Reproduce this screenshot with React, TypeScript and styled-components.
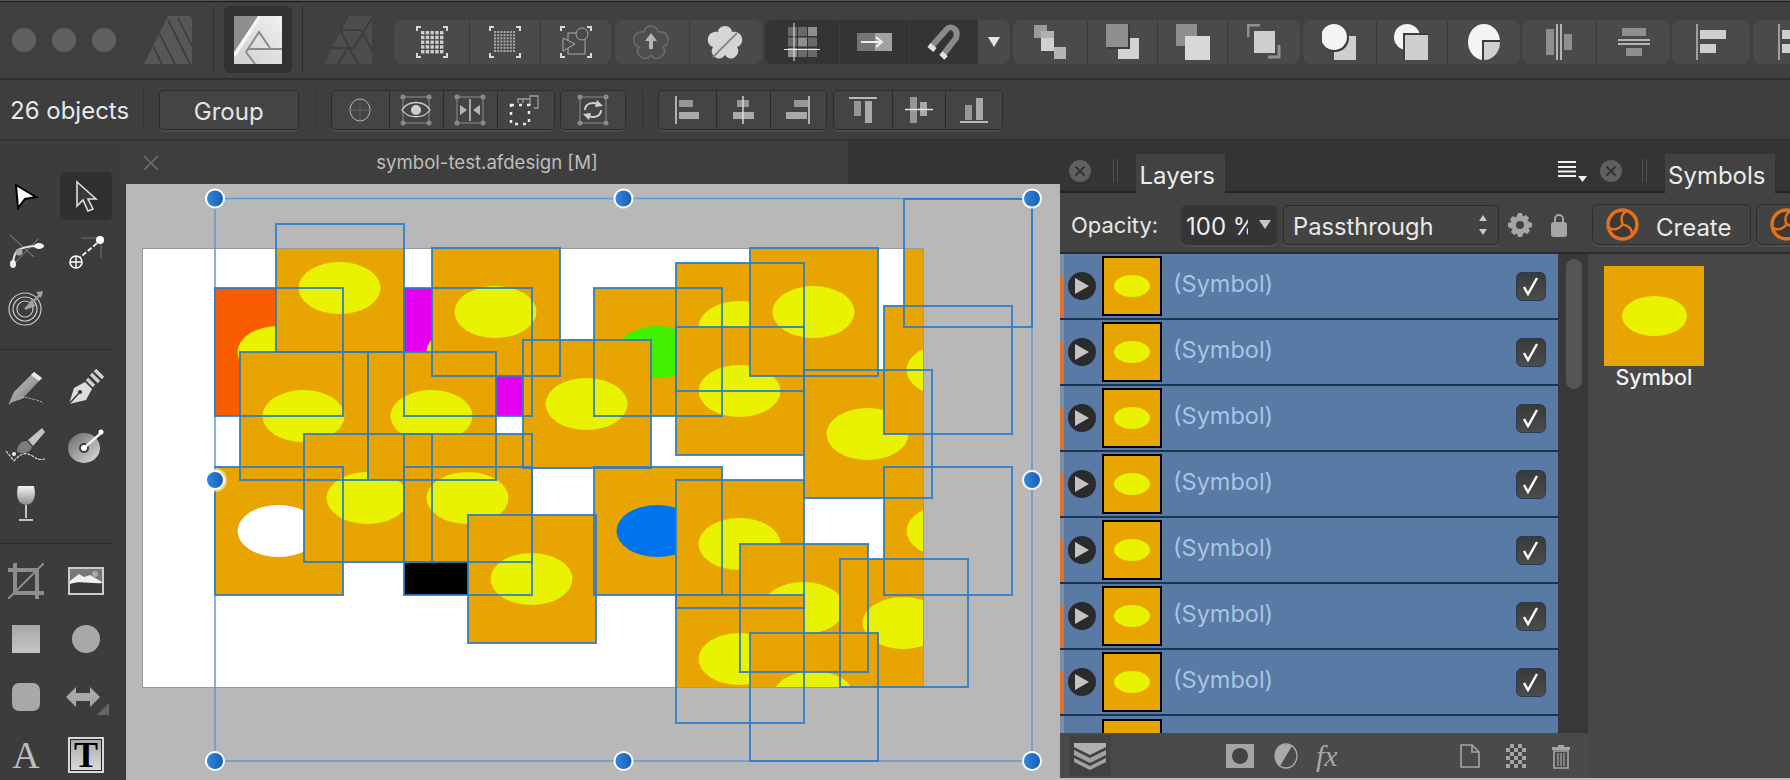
import React from "react";
import styled, { createGlobalStyle } from "styled-components";

const GlobalStyle = createGlobalStyle`
  html, body { margin: 0; padding: 0; background: #3f3f3f; overflow: hidden; }
  * { box-sizing: border-box; }
`;

const Page = styled.div`
  width: 1790px;
  height: 780px;
  display: flex;
  flex-direction: column;
  overflow: hidden;
  font-family: Inter, "Liberation Sans", sans-serif;
  color: #e6e6e6;
`;

const TopEdge = styled.div`
  height: 3px;
  flex: none;
  background: linear-gradient(#6a6a6a, #111 60%, #555);
`;

const TopBar = styled.div`
  height: 77px;
  flex: none;
  display: flex;
  align-items: flex-start;
  background: #404040;
  border-bottom: 2px solid #2f2f2f;
  overflow: hidden;
`;

const Dots = styled.div`
  display: flex;
  gap: 16px;
  margin: 25px 0 0 12px;
`;

const Dot = styled.span`
  width: 24px;
  height: 24px;
  border-radius: 50%;
  background: #606060;
`;

const Persona = styled.div<{ $ml: number }>`
  width: 48px;
  height: 48px;
  margin: 13px 0 0 ${(p) => p.$ml}px;
  flex: none;
`;

const VSep = styled.span<{ $ml: number; $h: number; $mt: number }>`
  width: 1px;
  height: ${(p) => p.$h}px;
  margin: ${(p) => p.$mt}px 0 0 ${(p) => p.$ml}px;
  background: #2e2e2e;
  flex: none;
`;

const PersonaTile = styled.div`
  width: 68px;
  height: 67px;
  margin: 3px 0 0 10px;
  border-radius: 6px;
  background: #323232;
  display: flex;
  align-items: center;
  justify-content: center;
  flex: none;
`;

const Cluster = styled.div<{ $ml?: number; $dark?: boolean; $flatRight?: boolean }>`
  display: flex;
  height: 44px;
  flex: none;
  margin: 17px 0 0 ${(p) => p.$ml ?? 3}px;
  border-radius: ${(p) => (p.$flatRight ? "8px 0 0 8px" : "8px")};
  overflow: hidden;
  background: ${(p) => (p.$dark ? "#343434" : "#4a4a4a")};
`;

const ClusterBtn = styled.div<{ $w: number }>`
  width: ${(p) => p.$w}px;
  flex: none;
  display: flex;
  align-items: center;
  justify-content: center;
  & + & { border-left: 1px solid #3c3c3c; }
`;

const Dropdown = styled.div`
  width: 31.5px;
  height: 44px;
  flex: none;
  margin-top: 17px;
  border-radius: 0 8px 8px 0;
  background: #4a4a4a;
  display: flex;
  align-items: center;
  justify-content: center;
`;

const ContextBar = styled.div`
  height: 61px;
  flex: none;
  display: flex;
  align-items: center;
  background: #3e3e3e;
  border-bottom: 2px solid #323232;
`;

const ObjectCount = styled.span`
  margin: 2px 0 0 10px;
  width: 119px;
  flex: none;
  font-size: 24px;
  white-space: nowrap;
  color: #e8e8e8;
`;

const BarSep = styled.span<{ $ml: number }>`
  width: 1px;
  height: 40px;
  margin-left: ${(p) => p.$ml}px;
  background: #333;
  flex: none;
`;

const GroupButton = styled.div`
  width: 139.5px;
  height: 40px;
  margin-left: 15px;
  flex: none;
  display: flex;
  align-items: center;
  justify-content: center;
  padding-top: 4px;
  font-size: 24px;
  color: #e4e4e4;
  background: #444;
  border: 1px solid #2c2c2c;
  border-radius: 4px;
  box-shadow: 0 2px 0 #4a4a4a;
`;

const CtxCluster = styled.div<{ $ml: number }>`
  height: 40px;
  margin-left: ${(p) => p.$ml}px;
  flex: none;
  display: flex;
  background: #444;
  border: 1px solid #2c2c2c;
  border-radius: 5px;
  box-shadow: 0 2px 0 #4a4a4a;
  overflow: hidden;
`;

const CtxBtn = styled.div<{ $w: number }>`
  width: ${(p) => p.$w}px;
  flex: none;
  display: flex;
  align-items: center;
  justify-content: center;
  & + & { border-left: 1px solid #2c2c2c; }
`;

const Workspace = styled.div`
  flex: 1;
  min-height: 0;
  display: flex;
`;

const ToolColumn = styled.div`
  width: 126px;
  flex: none;
  background: #3c3c3c;
  padding-top: 31px;
`;

const ToolSection = styled.div<{ $gap: number; $pt: number; $pb: number; $line?: boolean }>`
  width: 112px;
  display: grid;
  grid-template-columns: 52px 52px;
  column-gap: 8px;
  row-gap: ${(p) => p.$gap}px;
  grid-auto-rows: 48px;
  padding: ${(p) => p.$pt}px 0 ${(p) => p.$pb}px;
  border-bottom: ${(p) => (p.$line ? "1px solid #2c2c2c" : "none")};
`;

const Tool = styled.div<{ $active?: boolean }>`
  display: flex;
  align-items: center;
  justify-content: center;
  border-radius: 5px;
  background: ${(p) => (p.$active ? "#2f2f2f" : "transparent")};
`;

const CenterColumn = styled.div`
  width: 934px;
  flex: none;
  display: flex;
  flex-direction: column;
  background: #343434;
`;

const DocTab = styled.div`
  width: 722px;
  height: 43px;
  flex: none;
  position: relative;
  display: flex;
  align-items: center;
  justify-content: center;
  padding-bottom: 2px;
  background: #3e3e3e;
  font-size: 18.6px;
  color: #bdbdbd;
`;

const DocClose = styled.span`
  position: absolute;
  left: 17px;
  top: 14px;
  display: flex;
`;

const CanvasArea = styled.svg`
  display: block;
  flex: 1;
  width: 934px;
  min-height: 0;
  background: #b8b8b8;
`;

const Panel = styled.div`
  width: 730px;
  flex: none;
  display: flex;
  flex-direction: column;
  background: #343434;
  padding-top: 9px;
`;

const PanelHeader = styled.div`
  height: 43px;
  flex: none;
  display: flex;
  align-items: flex-end;
  border-bottom: 2px solid #232323;
  padding-left: 9px;
`;

const HeaderItem = styled.span<{ $ml: number }>`
  display: flex;
  align-self: center;
  margin-left: ${(p) => p.$ml}px;
  flex: none;
`;

const Grip = styled.span<{ $ml: number }>`
  width: 5px;
  height: 24px;
  align-self: center;
  margin-left: ${(p) => p.$ml}px;
  border-left: 1px solid #4f4f4f;
  border-right: 1px solid #4f4f4f;
  flex: none;
`;

const PanelTab = styled.div<{ $ml: number; $w: number }>`
  width: ${(p) => p.$w}px;
  height: 39px;
  margin: 0 0 -2px ${(p) => p.$ml}px;
  flex: none;
  display: flex;
  align-items: center;
  justify-content: center;
  padding: 4px 6px 0 0;
  font-size: 24px;
  color: #ececec;
  background: #424242;
`;

const Options = styled.div`
  height: 61px;
  flex: none;
  display: flex;
  align-items: center;
  padding: 4px 0 0 11px;
  background: #424242;
  border-bottom: 2px solid #2b2b2b;
  overflow: hidden;
`;

const OptLabel = styled.span`
  width: 86px;
  flex: none;
  font-size: 22px;
  white-space: nowrap;
  color: #e8e8e8;
`;

const OpacityField = styled.div`
  width: 96px;
  height: 40px;
  margin-left: 24px;
  flex: none;
  display: flex;
  align-items: center;
  padding-left: 5px;
  background: #353535;
  border-radius: 6px;
  box-shadow: 0 2px 0 #4c4c4c;
`;

const OpacityText = styled.span`
  width: 62px;
  margin-top: 4px;
  overflow: hidden;
  white-space: nowrap;
  font-size: 24px;
  color: #ededed;
  flex: none;
`;

const BlendSelect = styled.div`
  width: 216px;
  height: 40px;
  margin-left: 6px;
  flex: none;
  display: flex;
  align-items: center;
  justify-content: space-between;
  padding: 0 10px 0 9px;
  background: #434343;
  border: 1px solid #2c2c2c;
  border-radius: 4px;
  box-shadow: 0 2px 0 #4c4c4c;
  font-size: 23.7px;
  color: #e8e8e8;
`;

const ControlLabel = styled.span<{ $mt: number }>`
  margin-top: ${(p) => p.$mt}px;
`;

const OptIcon = styled.span<{ $ml: number }>`
  margin-left: ${(p) => p.$ml}px;
  display: flex;
  flex: none;
`;

const CreateButton = styled.div<{ $ml: number; $w: number }>`
  width: ${(p) => p.$w}px;
  height: 41px;
  margin-left: ${(p) => p.$ml}px;
  flex: none;
  display: flex;
  align-items: center;
  gap: 17px;
  padding-left: 13px;
  background: #434343;
  border: 1px solid #2c2c2c;
  border-radius: 6px;
  box-shadow: 0 2px 0 #505050;
  font-size: 24px;
  color: #e8e8e8;
`;

const PanelBody = styled.div`
  flex: 1;
  min-height: 0;
  display: flex;
`;

const LayersColumn = styled.div`
  width: 528px;
  flex: none;
  display: flex;
  flex-direction: column;
`;

const ListArea = styled.div`
  height: 479px;
  flex: none;
  display: flex;
`;

const LayerList = styled.div`
  width: 498px;
  flex: none;
  background: #587aa5;
  overflow: hidden;
`;

const LayerRow = styled.div`
  height: 66px;
  display: flex;
  align-items: center;
  padding-left: 4px;
  border-bottom: 2px solid #1d3450;
  background: linear-gradient(#7d8ea5 33%, #e5702a 33%) left top / 4px 100% no-repeat;
`;

const PlayButton = styled.span`
  width: 28px;
  height: 28px;
  margin-left: 4px;
  border-radius: 50%;
  background: #2b2b2d;
  display: flex;
  align-items: center;
  justify-content: center;
  flex: none;
`;

const LayerThumb = styled.span`
  width: 60px;
  height: 60px;
  margin-left: 6px;
  border: 2px solid #000;
  background: #e8a400;
  display: flex;
  align-items: center;
  justify-content: center;
  flex: none;
`;

const Blob = styled.span<{ $w: number; $h: number }>`
  width: ${(p) => p.$w}px;
  height: ${(p) => p.$h}px;
  border-radius: 50%;
  background: #e9f200;
  display: block;
`;

const LayerName = styled.span`
  margin: 0 0 5px 11px;
  font-size: 23.5px;
  color: #a9c3e3;
`;

const CheckBox = styled.span`
  width: 30px;
  height: 29px;
  margin: 0 12px 0 auto;
  border-radius: 6px;
  background: linear-gradient(#3a3a3a, #4c4c4c);
  border: 1px solid #2a3a50;
  display: flex;
  align-items: center;
  justify-content: center;
  flex: none;
`;

const PartialRow = styled.div`
  height: 17px;
  padding: 3px 0 0 38px;
  border-left: 4px solid #7d8ea5;
  overflow: hidden;
`;

const PartialThumb = styled.span`
  display: block;
  width: 60px;
  height: 60px;
  border: 2px solid #000;
  background: #e8a400;
`;

const ScrollTrack = styled.div`
  width: 30px;
  flex: none;
  padding: 5px 6px 0 8px;
  background: #383838;
`;

const ScrollThumb = styled.div`
  height: 130px;
  border-radius: 8px;
  background: #555;
`;

const BottomBar = styled.div`
  height: 45px;
  flex: none;
  display: flex;
  align-items: center;
  background: #4a4a4a;
`;

const LayersToggle = styled.div`
  width: 42px;
  height: 41px;
  margin-left: 9px;
  background: #424242;
  display: flex;
  align-items: center;
  justify-content: center;
  flex: none;
`;

const BottomIcon = styled.span<{ $ml: number }>`
  margin-left: ${(p) => p.$ml}px;
  display: flex;
  flex: none;
`;

const FxLabel = styled.span`
  margin-left: 18px;
  width: 28px;
  flex: none;
  font: italic 30px "Liberation Serif", serif;
  color: #a8a8a8;
`;

const SymbolsColumn = styled.div`
  flex: 1;
  background: #484848;
  padding: 12px 0 0 16px;
`;

const SymbolCard = styled.div`
  width: 100px;
  display: flex;
  flex-direction: column;
  align-items: center;
`;

const SymbolThumb = styled.div`
  width: 100px;
  height: 100px;
  background: #e8a400;
  display: flex;
  align-items: center;
  justify-content: center;
`;

const SymbolName = styled.span`
  margin-top: -2px;
  font-size: 21.5px;
  font-weight: 500;
  color: #f2f2f2;
`;

const BottomEdge = styled.div`
  height: 2px;
  flex: none;
  background: #bdbdbd;
`;

const ToolGlyph = styled.span<{ $size: number; $framed?: boolean }>`
  font-family: "Liberation Serif", serif;
  font-size: ${(p) => p.$size}px;
  line-height: ${(p) => (p.$framed ? 32 : 36)}px;
  width: 36px;
  height: 36px;
  text-align: center;
  display: block;
  color: ${(p) => (p.$framed ? "#000" : "#bdbdbd")};
  font-weight: ${(p) => (p.$framed ? 700 : 400)};
  background: ${(p) => (p.$framed ? "linear-gradient(#a8a8a8, #dcdcdc)" : "transparent")};
  border: ${(p) => (p.$framed ? "2px solid #d8d8d8" : "none")};
  outline: ${(p) => (p.$framed ? "1px solid #222" : "none")};
  outline-offset: -3px;
`;

/* small svg helper for the toolbar drawings */
const Ico = ({ w = 40, h = 40, children }: { w?: number; h?: number; children: React.ReactNode }) => (
  <svg width={w} height={h} viewBox={`0 0 ${w} ${h}`} style={{ display: "block", flex: "none" }}>
    {children}
  </svg>
);

const Corners = ({ c = "#d8d8d8" }: { c?: string }) => (
  <path d="M3 7V3h4M29 3h4v4M3 29v4h4M33 29v4h-4" fill="none" stroke={c} strokeWidth="2" />
);

const SnapGrid = ({ fine }: { fine?: boolean }) => {
  const n = fine ? 7 : 5;
  const s = fine ? 2 : 3.4;
  const cells = [];
  for (let i = 0; i < n; i++)
    for (let j = 0; j < n; j++)
      cells.push(<rect key={i + "-" + j} x={7 + (i * 19) / (n - 1)} y={7 + (j * 19) / (n - 1)} width={s} height={s} fill={fine ? "#a8a8a8" : "#cfcfcf"} />);
  return (
    <Ico w={36} h={36}>
      <Corners />
      {cells}
    </Ico>
  );
};

const FrameShapes = () => (
  <Ico w={36} h={36}>
    <Corners />
    <rect x="10" y="9" width="17" height="21" fill="none" stroke="#aaa" />
    <circle cx="24" cy="10" r="6" fill="#4a4a4a" stroke="#aaa" />
    <path d="M5 14l12 6-12 7z" fill="#4a4a4a" stroke="#aaa" />
  </Ico>
);

const FLOWER = "M18 2c4 0 7 3 7 6 4-1 9 1 10 6s-2 8-5 9c2 3 2 7-2 10s-8 1-10-2c-2 3-6 5-10 2s-4-7-2-10c-3-1-6-4-5-9s6-7 10-6c0-3 3-6 7-6z";

const FlowerUp = () => (
  <Ico w={37} h={37}>
    <path d={FLOWER} fill="#4e4e4e" stroke="#6c6c6c" strokeWidth="1.5" />
    <path d="M18 9l6 8h-4v8h-4v-8h-4z" fill="#b5b5b5" />
  </Ico>
);

const FlowerCut = () => (
  <Ico w={37} h={37}>
    <path d={FLOWER} fill="#d5d5d5" />
    <path d="M6 33L30 9" stroke="#8a8a8a" strokeWidth="2" />
  </Ico>
);

const GridCross = () => {
  const cells = [];
  for (let i = 0; i < 3; i++)
    for (let j = 0; j < 3; j++)
      cells.push(<rect key={i + "-" + j} x={4 + i * 10} y={4 + j * 10.5} width="9" height="9" fill={i + j === 2 || (i === 1 && j === 1) ? "#8f8f8f" : "#6a6a6a"} />);
  return (
    <Ico w={36} h={38}>
      {cells}
      <path d="M10 0v38M0 26.5h36" stroke="#e8e8e8" strokeWidth="1" />
    </Ico>
  );
};

const MoveSquares = () => (
  <Ico w={36} h={20}>
    <rect x="0" y="1" width="18" height="18" fill="#747474" />
    <rect x="18" y="1" width="17" height="18" fill="#a2a2a2" />
    <path d="M4 10h19M19 5l6 5-6 5" fill="none" stroke="#eee" strokeWidth="2" />
  </Ico>
);

const Magnet = () => (
  <Ico w={36} h={36}>
    <path d="M5 23L21 5c4-4 12 0 9 9L17 31" fill="none" stroke="#8a8a8a" strokeWidth="6" />
    <path d="M3 21l6 5M15 29l5 5" stroke="#e0e0e0" strokeWidth="5" />
  </Ico>
);

const DownTriangle = () => (
  <Ico w={14} h={12}>
    <path d="M1 1h12L7 11z" fill="#e4e4e4" />
  </Ico>
);

const Steps = () => (
  <Ico w={34} h={36}>
    <rect x="1" y="1" width="13" height="13" fill="#9a9a9a" />
    <rect x="8" y="7" width="13" height="13" fill="#b0b0b0" />
    <rect x="8" y="14" width="13" height="13" fill="#d0d0d0" />
    <rect x="21" y="23" width="12" height="12" fill="#b5b5b5" />
  </Ico>
);

const SquareOverSquare = () => (
  <Ico w={34} h={36}>
    <rect x="12" y="14" width="21" height="21" fill="#d2d2d2" />
    <rect x="1" y="1" width="23" height="24" fill="#3b3b3b" />
    <rect x="0" y="0" width="22" height="23" fill="#8f8f8f" />
  </Ico>
);

const SquareFront = () => (
  <Ico w={34} h={36}>
    <rect x="0" y="0" width="21" height="22" fill="#8f8f8f" />
    <rect x="9" y="12" width="25" height="24" fill="#d8d8d8" />
  </Ico>
);

const SquareCorners = () => (
  <Ico w={34} h={36}>
    <path d="M1 13V1h12" fill="none" stroke="#8f8f8f" strokeWidth="3" />
    <rect x="7" y="7" width="21" height="22" fill="#cfcfcf" />
    <path d="M21 33h11V21" fill="none" stroke="#8f8f8f" strokeWidth="3" />
  </Ico>
);

const CircleBack = () => (
  <Ico w={36} h={36}>
    <rect x="12" y="12" width="22" height="24" fill="#cfcfcf" />
    <ellipse cx="13" cy="14" rx="14" ry="14" fill="#3b3b3b" />
    <ellipse cx="12" cy="13" rx="13" ry="13" fill="#f4f4f4" />
  </Ico>
);

const CircleBehind = () => (
  <Ico w={36} h={36}>
    <ellipse cx="13" cy="13" rx="13" ry="13" fill="#f4f4f4" />
    <rect x="9" y="9" width="25" height="27" fill="#3f3f3f" />
    <rect x="11" y="11" width="23" height="25" fill="#cfcfcf" />
  </Ico>
);

const CircleNotch = () => (
  <Ico w={34} h={36}>
    <ellipse cx="17" cy="18" rx="16" ry="18" fill="#f4f4f4" />
    <path d="M15 36V16h18a16 18 0 0 1-18 20z" fill="#3a3a3a" />
    <path d="M17 36V18h16a16 18 0 0 1-16 18z" fill="#cfcfcf" />
  </Ico>
);

const VCenterBars = () => (
  <Ico w={28} h={36}>
    <rect x="1" y="5" width="8" height="26" fill="#8f8f8f" />
    <path d="M12 0v36M16 0v36" stroke="#d8d8d8" strokeWidth="1.5" />
    <rect x="19" y="10" width="8" height="16" fill="#8f8f8f" />
  </Ico>
);

const HCenterBars = () => (
  <Ico w={34} h={28}>
    <rect x="5" y="0" width="24" height="8" fill="#8f8f8f" />
    <path d="M1 12h32M1 16h32" stroke="#d8d8d8" strokeWidth="1.5" />
    <rect x="9" y="20" width="16" height="8" fill="#8f8f8f" />
  </Ico>
);

const AlignLeftTop = () => (
  <Ico w={30} h={36}>
    <path d="M1 0v36" stroke="#bcbcbc" strokeWidth="1.5" />
    <rect x="4" y="6" width="26" height="9" fill="#cfcfcf" />
    <rect x="4" y="20" width="16" height="9" fill="#cfcfcf" />
  </Ico>
);

const Crosshair = () => (
  <Ico w={24} h={28}>
    <ellipse cx="12" cy="14" rx="10" ry="11" fill="none" stroke="#b5b5b5" />
    <path d="M12 1v26M0 14h24" stroke="#6a6a6a" strokeWidth="0.8" />
  </Ico>
);

const FrameDots = () => (
  <g fill="#8b8b8b">
    <circle cx="3" cy="3" r="2.5" />
    <circle cx="29" cy="3" r="2.5" />
    <circle cx="3" cy="29" r="2.5" />
    <circle cx="29" cy="29" r="2.5" />
  </g>
);

const EyeFrame = () => (
  <Ico w={32} h={32}>
    <rect x="3" y="3" width="26" height="26" fill="none" stroke="#8b8b8b" />
    <FrameDots />
    <path d="M2 16c6-10 22-10 28 0-6 9-22 9-28 0z" fill="#444" stroke="#cfcfcf" strokeWidth="1.3" />
    <circle cx="16" cy="16" r="5" fill="#cfcfcf" />
  </Ico>
);

const FlipFrame = () => (
  <Ico w={32} h={32}>
    <rect x="3" y="3" width="26" height="26" fill="none" stroke="#8b8b8b" />
    <FrameDots />
    <path d="M16 5v22" stroke="#ddd" strokeWidth="1.3" />
    <path d="M6 11l7 5-7 5zM26 11l-7 5 7 5z" fill="#b5b5b5" />
  </Ico>
);

const DottedSquare = () => (
  <Ico w={34} h={34}>
    <path d="M9 10V6h5v4M14 6h7v-3h0M21 13V3h8v12h-4" fill="none" stroke="#9a9a9a" strokeWidth="1.3" />
    <rect x="2" y="12" width="18" height="19" fill="none" stroke="#e8e8e8" strokeWidth="2.5" strokeDasharray="3 5" />
  </Ico>
);

const RotateFrame = () => (
  <Ico w={32} h={32}>
    <rect x="3" y="3" width="26" height="26" fill="none" stroke="#8b8b8b" />
    <FrameDots />
    <path d="M8 16c0-7 9-9 14-5M24 16c0 7-9 9-14 5" fill="none" stroke="#cfcfcf" strokeWidth="2" />
    <path d="M20 6l6 6-8 1zM12 26l-6-6 8-1z" fill="#cfcfcf" />
  </Ico>
);

const AlignH = ({ pos }: { pos: "l" | "c" | "r" }) => {
  const x = pos === "l" ? 1 : pos === "c" ? 12 : 23;
  const rects =
    pos === "l"
      ? [[4, 14], [4, 22]]
      : pos === "c"
        ? [[6, 12], [2, 21]]
        : [[8, 14], [0, 21]];
  return (
    <Ico w={24} h={30}>
      <rect x={rects[0][0]} y="5" width={rects[0][1]} height="7" fill="#969696" />
      <rect x={rects[1][0]} y="17" width={rects[1][1]} height="7" fill="#a8a8a8" />
      <path d={`M${x} 1v28`} stroke="#e0e0e0" strokeWidth="1.4" />
    </Ico>
  );
};

const AlignV = ({ pos }: { pos: "t" | "m" | "b" }) => {
  if (pos === "t")
    return (
      <Ico w={28} h={26}>
        <path d="M0 1h28" stroke="#e0e0e0" strokeWidth="1.6" />
        <rect x="5" y="4" width="7" height="15" fill="#969696" />
        <rect x="16" y="4" width="7" height="22" fill="#a8a8a8" />
      </Ico>
    );
  if (pos === "m")
    return (
      <Ico w={28} h={26}>
        <rect x="5" y="0" width="7" height="26" fill="#969696" />
        <rect x="15" y="5" width="7" height="14" fill="#a8a8a8" />
        <path d="M0 12.5h28" stroke="#e0e0e0" strokeWidth="1.6" />
      </Ico>
    );
  return (
    <Ico w={28} h={26}>
      <rect x="5" y="8" width="7" height="15" fill="#969696" />
      <rect x="16" y="1" width="7" height="22" fill="#a8a8a8" />
      <path d="M0 25h28" stroke="#e0e0e0" strokeWidth="1.6" />
    </Ico>
  );
};

const DesignerDim = () => (
  <Ico w={48} h={48}>
    <path d="M0 48L24 0h22l2 2v46z" fill="#575757" />
    <path d="M24 4l22 44M15 17l16 31M9 30l9 18M34 2l14 28" stroke="#404040" strokeWidth="2" />
  </Ico>
);

const DesignerLit = () => (
  <Ico w={48} h={48}>
    <defs>
      <linearGradient id="litg" x1="1" y1="0" x2="0" y2="1">
        <stop offset="0" stopColor="#f0f0f0" />
        <stop offset="1" stopColor="#cfcfcf" />
      </linearGradient>
    </defs>
    <rect width="48" height="48" fill="url(#litg)" />
    <path d="M0 0h24L0 36z" fill="#8e8e8e" />
    <path d="M26 0L0 40" stroke="#f7f7f7" strokeWidth="3" />
    <path d="M12 36l13-20 11 16M13 33h35M12 36l9 12" fill="none" stroke="#8a8a8a" strokeWidth="2" />
  </Ico>
);

const PhotoDim = () => (
  <Ico w={48} h={48}>
    <path d="M0 48L18 12 24 0h24v48z" fill="#4d4d4d" />
    <path d="M24 0l-8 14 18 34M48 2L30 32H4M16 14h21l11 20M14 48l11-18" fill="none" stroke="#3d3d3d" strokeWidth="2" />
  </Ico>
);

const Triskele = ({ size = 33 }: { size?: number }) => (
  <svg width={size} height={size} viewBox="0 0 32 32" style={{ display: "block", flex: "none" }}>
    <circle cx="16" cy="16" r="14" fill="#3c3836" stroke="#e8701a" strokeWidth="3.4" />
    <path d="M16 16C16 10 19 6 24 5" fill="none" stroke="#e8701a" strokeWidth="2.4" transform="rotate(-20 16 16)" />
    <path d="M16 16C16 10 19 6 24 5" fill="none" stroke="#e8701a" strokeWidth="2.4" transform="rotate(100 16 16)" />
    <path d="M16 16C16 10 19 6 24 5" fill="none" stroke="#e8701a" strokeWidth="2.4" transform="rotate(220 16 16)" />
  </svg>
);

const CloseCircle = () => (
  <Ico w={22} h={22}>
    <circle cx="11" cy="11" r="11" fill="#606060" />
    <path d="M6.5 6.5l9 9M15.5 6.5l-9 9" stroke="#333" strokeWidth="2" />
  </Ico>
);

const PanelMenu = () => (
  <Ico w={30} h={22}>
    <path d="M0 2h18M0 7h18M0 11.5h18M0 16h18" stroke="#f0f0f0" strokeWidth="2" />
    <path d="M20 16h9l-4.500 6z" fill="#f0f0f0" />
  </Ico>
);

const Stepper = () => (
  <Ico w={10} h={24}>
    <path d="M5 2l4 6H1zM5 22l-4-6h8z" fill="#c8c8c8" />
  </Ico>
);

const Gear = () => (
  <Ico w={24} h={24}>
    <path d="M10 0h4l1 3.500 3-1.500 3 3-1.500 3L24 10v4l-3.500 1 1.500 3-3 3-3-1.500L14 24h-4l-1-3.500L6 22l-3-3 1.500-3L0 14v-4l3.500-1L2 6l3-3 3 1.500z" fill="#a5a5a5" />
    <circle cx="12" cy="12" r="4" fill="#424242" />
  </Ico>
);

const Lock = () => (
  <Ico w={16} h={24}>
    <path d="M4 10V6a4 4 0 0 1 8 0v4" fill="none" stroke="#a5a5a5" strokeWidth="2" />
    <rect x="0" y="9" width="16" height="15" rx="3" fill="#a5a5a5" />
  </Ico>
);

const LayersStack = () => (
  <Ico w={34} h={28}>
    <path d="M1 1h32v4L17 13 1 5z" fill="#b0b0b0" />
    <path d="M1 8l16 8 16-8v5l-16 8-16-8z" fill="#a2a2a2" />
    <path d="M1 16l16 8 16-8v4l-16 8-16-8z" fill="#a2a2a2" />
  </Ico>
);

const MaskIcon = () => (
  <Ico w={28} h={24}>
    <rect width="28" height="24" fill="#a5a5a5" />
    <circle cx="14" cy="12" r="8" fill="#444" />
  </Ico>
);

const AdjustIcon = () => (
  <Ico w={24} h={26}>
    <ellipse cx="12" cy="13" rx="11" ry="12" fill="#4a4a4a" stroke="#aaa" strokeWidth="1.3" />
    <path d="M18 3L6 23C0 18-1 8 6 3c4-2 8-2 12 0z" fill="#aaa" />
  </Ico>
);

const DocIcon = () => (
  <Ico w={20} h={24}>
    <path d="M1 1h11l7 7v15H1z" fill="none" stroke="#a5a5a5" strokeWidth="1.6" />
    <path d="M12 1v7h7" fill="none" stroke="#a5a5a5" strokeWidth="1.6" />
  </Ico>
);

const CheckerIcon = () => {
  const cells = [];
  for (let i = 0; i < 5; i++)
    for (let j = 0; j < 6; j++)
      if ((i + j) % 2 === 0) cells.push(<rect key={i + "-" + j} x={i * 4} y={j * 4} width="4" height="4" fill="#444" />);
  return (
    <Ico w={20} h={24}>
      <rect width="20" height="24" fill="#a5a5a5" />
      {cells}
    </Ico>
  );
};

const TrashIcon = () => (
  <Ico w={18} h={26}>
    <path d="M6 2h6v2H6zM0 4h18v3H0z" fill="#a5a5a5" />
    <path d="M2 8h14v17H2z" fill="none" stroke="#a5a5a5" strokeWidth="1.6" />
    <path d="M6 10v13M9 10v13M12 10v13" stroke="#a5a5a5" strokeWidth="1.2" />
  </Ico>
);

const PlayArrow = () => (
  <Ico w={14} h={16}>
    <path d="M0 0l14 8-14 8z" fill="#c4c4c4" />
  </Ico>
);

const CheckMark = () => (
  <Ico w={18} h={20}>
    <path d="M2 11l4 7L15 2" fill="none" stroke="#fff" strokeWidth="2.4" />
  </Ico>
);

const ToolMove = () => (
  <Ico w={28} h={28}>
    <path d="M4 3l20 12-11 2-7 9z" fill="#fff" stroke="#000" strokeWidth="2" />
  </Ico>
);

const ToolNode = () => (
  <Ico w={24} h={32}>
    <path d="M3 2v24l6-6 5 11 5-2-5-10h8z" fill="#3a3a3a" stroke="#ddd" strokeWidth="1.6" />
  </Ico>
);

const ToolPen = () => (
  <Ico w={38} h={38}>
    <path d="M3 2l24 22M31 6L8 30" stroke="#8d8d8d" strokeWidth="1" />
    <path d="M6 34c0-14 2-21 26-21" fill="none" stroke="#e4e4e4" strokeWidth="2" />
    <circle cx="12" cy="19" r="3.500" fill="#a8a8a8" />
    <ellipse cx="32" cy="13" rx="5" ry="3" fill="#f0f0f0" />
    <ellipse cx="6" cy="31" rx="3" ry="4" fill="#f0f0f0" />
  </Ico>
);

const ToolCorner = () => (
  <Ico w={38} h={34}>
    <path d="M14 3h20v20" fill="none" stroke="#555" strokeWidth="2" />
    <path d="M10 25L34 5" stroke="#e8e8e8" strokeWidth="2" strokeDasharray="5 2" />
    <circle cx="33" cy="5" r="4" fill="#fff" />
    <circle cx="9" cy="27" r="6" fill="#3c3c3c" stroke="#fff" strokeWidth="1.6" />
    <path d="M3 27h12M9 21v12" stroke="#fff" strokeWidth="1.4" />
  </Ico>
);

const ToolTarget = () => (
  <Ico w={38} h={38}>
    <circle cx="18" cy="20" r="16" fill="none" stroke="#c8c8c8" strokeWidth="1.2" />
    <circle cx="18" cy="20" r="12" fill="none" stroke="#c8c8c8" strokeWidth="1.2" />
    <circle cx="18" cy="20" r="8" fill="none" stroke="#c8c8c8" strokeWidth="1.2" />
    <path d="M18 20L35 4" stroke="#9a9a9a" strokeWidth="2.5" />
    <path d="M18 21l6-10 5 6z" fill="#a0a0a0" />
    <path d="M29 3l7-1-2 7z" fill="#a0a0a0" />
  </Ico>
);

const ToolPencil = () => (
  <Ico w={38} h={36}>
    <defs>
      <linearGradient id="pcl" x1="0" y1="0" x2="1" y2="1">
        <stop offset="0" stopColor="#d8d8d8" />
        <stop offset="1" stopColor="#666" />
      </linearGradient>
    </defs>
    <path d="M2 34l5-11L27 3l8 6-20 21z" fill="url(#pcl)" />
    <path d="M27 3l8 6-3 3-8-6z" fill="#e8e8e8" />
    <path d="M2 35c8-6 14-8 20-6s10 2 14 5" fill="none" stroke="#bbb" strokeWidth="1" strokeDasharray="2 1" />
  </Ico>
);

const ToolNib = () => (
  <Ico w={36} h={36}>
    <path d="M1 35l5-16 11-6 7 7-6 11z" fill="#ddd" />
    <path d="M1 35l10-11" stroke="#333" strokeWidth="1.4" />
    <circle cx="12" cy="23" r="2" fill="#333" />
    <path d="M19 10l7 7M23 5l8 8M27 1l8 8" stroke="#d0d0d0" strokeWidth="3.5" />
  </Ico>
);

const ToolBrush = () => (
  <Ico w={40} h={36}>
    <path d="M11 25c0-8 5-11 10-11l5 6c-1 4-7 8-15 5z" fill="#7d7d7d" />
    <path d="M22 13l14-12 3 4-12 14z" fill="#c4c4c4" />
    <path d="M0 24l8 10M8 34c8-10 14-8 20-4s8 2 11 2" fill="none" stroke="#ddd" strokeWidth="1.2" strokeDasharray="3 1" />
    <circle cx="8" cy="27" r="2" fill="#eee" />
  </Ico>
);

const ToolFill = () => (
  <Ico w={38} h={36}>
    <defs>
      <linearGradient id="fil" x1="0" y1="0" x2="1" y2="1">
        <stop offset="0" stopColor="#666" />
        <stop offset="1" stopColor="#e0e0e0" />
      </linearGradient>
    </defs>
    <ellipse cx="17" cy="21" rx="16" ry="15" fill="url(#fil)" />
    <circle cx="17" cy="21" r="5" fill="#3c3c3c" />
    <path d="M17 21L34 6" stroke="#f0f0f0" strokeWidth="2.4" />
    <circle cx="17" cy="21" r="3" fill="#fff" />
    <circle cx="34" cy="5" r="2.500" fill="#fff" />
  </Ico>
);

const ToolGlass = () => (
  <Ico w={20} h={36}>
    <defs>
      <linearGradient id="gls" x1="0" y1="0" x2="0" y2="1">
        <stop offset="0" stopColor="#f4f4f4" />
        <stop offset="1" stopColor="#8a8a8a" />
      </linearGradient>
    </defs>
    <path d="M2 1h16c2 9 1 18-8 19C1 19 0 10 2 1z" fill="url(#gls)" />
    <path d="M10 20v13M3 35h14" stroke="#c4c4c4" strokeWidth="2" />
  </Ico>
);

const ToolCrop = () => (
  <Ico w={36} h={36}>
    <path d="M7 0v30h29M0 7h29v29" fill="none" stroke="#8d8d8d" strokeWidth="4" />
    <path d="M0 36L36 0" stroke="#8d8d8d" strokeWidth="2" />
  </Ico>
);

const ToolPicture = () => (
  <Ico w={36} h={28}>
    <rect x="1" y="1" width="34" height="26" fill="#777" stroke="#ccc" strokeWidth="2" />
    <path d="M2 14l9-7 5 3 6-2 12 7v11H2z" fill="#eee" />
    <circle cx="27" cy="7" r="3" fill="#aaa" />
    <path d="M2 17c10-4 20 0 32-1v10H2z" fill="#3a3a3a" />
  </Ico>
);

const ToolRect = () => (
  <Ico w={28} h={28}>
    <defs>
      <linearGradient id="shp" x1="0" y1="0" x2="0" y2="1">
        <stop offset="0" stopColor="#a8a8a8" />
        <stop offset="1" stopColor="#c4c4c4" />
      </linearGradient>
    </defs>
    <rect width="28" height="28" fill="url(#shp)" />
  </Ico>
);

const ToolEllipse = () => (
  <Ico w={28} h={28}>
    <ellipse cx="14" cy="14" rx="14" ry="14" fill="#a8a8a8" />
  </Ico>
);

const ToolRounded = () => (
  <Ico w={28} h={28}>
    <rect width="28" height="28" rx="7" fill="#a8a8a8" />
  </Ico>
);

const ToolArrows = () => (
  <Ico w={46} h={36}>
    <path d="M13 8v6h14V8l10 10-10 10v-6H13v6L3 18z" fill="#a8a8a8" />
    <path d="M46 24v12H34z" fill="#666" />
  </Ico>
);

const ART_ORANGE = "#e8a400";
const ART_YELLOW = "#e9f200";

type Sym = { x: number; y: number; base?: string; ell?: string };

// order is back to front, coordinates as on the screen
const SYMBOLS: Sym[] = [
  { x: 215, y: 288, base: "#fa5c00" },
  { x: 404, y: 288, base: "#e600f0" },
  { x: 594, y: 288, ell: "#40f000" },
  { x: 215, y: 467, ell: "#ffffff" },
  { x: 404, y: 467, base: "#000000" },
  { x: 594, y: 467, ell: "#0073ee" },
  { x: 276, y: 224 },
  { x: 240, y: 352 },
  { x: 304, y: 434 },
  { x: 368, y: 352 },
  { x: 404, y: 434 },
  { x: 432, y: 248 },
  { x: 523, y: 340 },
  { x: 468, y: 515 },
  { x: 676, y: 263 },
  { x: 676, y: 327 },
  { x: 750, y: 248 },
  { x: 804, y: 370 },
  { x: 884, y: 306 },
  { x: 904, y: 199 },
  { x: 884, y: 467 },
  { x: 676, y: 480 },
  { x: 740, y: 544 },
  { x: 840, y: 559 },
  { x: 676, y: 595 },
  { x: 750, y: 633 },
];

const HANDLES = [
  [215, 198.5],
  [623.5, 198.5],
  [1032, 198.5],
  [215, 480],
  [1032, 480],
  [215, 761],
  [623.5, 761],
  [1032, 761],
];

const Artwork = () => (
  <CanvasArea viewBox="126 184 934 596" preserveAspectRatio="none">
    <defs>
      <clipPath id="page">
        <rect x="143" y="249" width="780" height="438" />
      </clipPath>
      <linearGradient id="handle" x1="0" y1="0" x2="1" y2="0">
        <stop offset="0" stopColor="#2f86e0" />
        <stop offset="1" stopColor="#1a5fb0" />
      </linearGradient>
    </defs>
    <rect x="142" y="248" width="782" height="440" fill="#999" />
    <rect x="143" y="249" width="780" height="438" fill="#fff" />
    <g clipPath="url(#page)">
      {SYMBOLS.map((s, i) => (
        <g key={i}>
          <rect x={s.x} y={s.y} width="128" height="128" fill={s.base ?? ART_ORANGE} />
          <ellipse cx={s.x + 63.5} cy={s.y + 64} rx="41" ry="26" fill={s.ell ?? ART_YELLOW} />
        </g>
      ))}
    </g>
    <rect x="215" y="198.500" width="817" height="562.500" fill="none" stroke="#5a9bd8" strokeWidth="1.500" />
    {SYMBOLS.map((s, i) => (
      <rect key={i} x={s.x} y={s.y} width="128" height="128" fill="none" stroke="#2a7bc8" strokeOpacity="0.88" strokeWidth="2" />
    ))}
    {HANDLES.map(([x, y], i) => (
      <g key={i}>
        {i === 3 && <circle cx={x} cy={y} r="12" fill="#fff" fillOpacity="0.5" />}
        <circle cx={x} cy={y} r="10" fill="#fff" />
        <circle cx={x} cy={y} r="8" fill="url(#handle)" />
      </g>
    ))}
  </CanvasArea>
);

const LAYER_ROWS = [0, 1, 2, 3, 4, 5, 6];

export default function App() {
  return (
    <Page>
      <GlobalStyle />
      <TopEdge />
      <TopBar>
        <Dots>
          <Dot />
          <Dot />
          <Dot />
        </Dots>
        <Persona $ml={28}>
          <DesignerDim />
        </Persona>
        <VSep $ml={21} $h={66} $mt={3} />
        <PersonaTile>
          <DesignerLit />
        </PersonaTile>
        <VSep $ml={10} $h={66} $mt={3} />
        <Persona $ml={21}>
          <PhotoDim />
        </Persona>
        <Cluster $ml={22}>
          <ClusterBtn $w={75}><SnapGrid /></ClusterBtn>
          <ClusterBtn $w={71}><SnapGrid fine /></ClusterBtn>
          <ClusterBtn $w={71}><FrameShapes /></ClusterBtn>
        </Cluster>
        <Cluster $ml={3.5}>
          <ClusterBtn $w={74.5}><FlowerUp /></ClusterBtn>
          <ClusterBtn $w={72.5}><FlowerCut /></ClusterBtn>
        </Cluster>
        <Cluster $ml={3} $dark $flatRight>
          <ClusterBtn $w={74.5}><GridCross /></ClusterBtn>
          <ClusterBtn $w={70}><MoveSquares /></ClusterBtn>
          <ClusterBtn $w={69}><Magnet /></ClusterBtn>
        </Cluster>
        <Dropdown>
          <DownTriangle />
        </Dropdown>
        <Cluster>
          <ClusterBtn $w={74.5}><Steps /></ClusterBtn>
          <ClusterBtn $w={70}><SquareOverSquare /></ClusterBtn>
          <ClusterBtn $w={70}><SquareFront /></ClusterBtn>
          <ClusterBtn $w={73}><SquareCorners /></ClusterBtn>
        </Cluster>
        <Cluster>
          <ClusterBtn $w={73}><CircleBack /></ClusterBtn>
          <ClusterBtn $w={71}><CircleBehind /></ClusterBtn>
          <ClusterBtn $w={73}><CircleNotch /></ClusterBtn>
        </Cluster>
        <Cluster $ml={2}>
          <ClusterBtn $w={74}><VCenterBars /></ClusterBtn>
          <ClusterBtn $w={74}><HCenterBars /></ClusterBtn>
        </Cluster>
        <Cluster $ml={2}>
          <ClusterBtn $w={78}><AlignLeftTop /></ClusterBtn>
        </Cluster>
        <Cluster>
          <ClusterBtn $w={80}><AlignLeftTop /></ClusterBtn>
        </Cluster>
      </TopBar>
      <ContextBar>
        <ObjectCount>26 objects</ObjectCount>
        <BarSep $ml={14} />
        <GroupButton>Group</GroupButton>
        <BarSep $ml={16} />
        <CtxCluster $ml={15}>
          <CtxBtn $w={57}><Crosshair /></CtxBtn>
          <CtxBtn $w={54}><EyeFrame /></CtxBtn>
          <CtxBtn $w={54}><FlipFrame /></CtxBtn>
          <CtxBtn $w={57}><DottedSquare /></CtxBtn>
        </CtxCluster>
        <CtxCluster $ml={5}>
          <CtxBtn $w={64}><RotateFrame /></CtxBtn>
        </CtxCluster>
        <BarSep $ml={16} />
        <CtxCluster $ml={15}>
          <CtxBtn $w={57.5}><AlignH pos="l" /></CtxBtn>
          <CtxBtn $w={53.5}><AlignH pos="c" /></CtxBtn>
          <CtxBtn $w={56.5}><AlignH pos="r" /></CtxBtn>
        </CtxCluster>
        <CtxCluster $ml={6}>
          <CtxBtn $w={57.5}><AlignV pos="t" /></CtxBtn>
          <CtxBtn $w={53.5}><AlignV pos="m" /></CtxBtn>
          <CtxBtn $w={56.5}><AlignV pos="b" /></CtxBtn>
        </CtxCluster>
      </ContextBar>
      <Workspace>
        <ToolColumn>
          <ToolSection $gap={8} $pt={0} $pb={17} $line>
            <Tool><ToolMove /></Tool>
            <Tool $active><ToolNode /></Tool>
            <Tool><ToolPen /></Tool>
            <Tool><ToolCorner /></Tool>
            <Tool><ToolTarget /></Tool>
          </ToolSection>
          <ToolSection $gap={10} $pt={13} $pb={16} $line>
            <Tool><ToolPencil /></Tool>
            <Tool><ToolNib /></Tool>
            <Tool><ToolBrush /></Tool>
            <Tool><ToolFill /></Tool>
            <Tool><ToolGlass /></Tool>
          </ToolSection>
          <ToolSection $gap={10} $pt={13} $pb={0}>
            <Tool><ToolCrop /></Tool>
            <Tool><ToolPicture /></Tool>
            <Tool><ToolRect /></Tool>
            <Tool><ToolEllipse /></Tool>
            <Tool><ToolRounded /></Tool>
            <Tool><ToolArrows /></Tool>
            <Tool><ToolGlyph $size={38}>A</ToolGlyph></Tool>
            <Tool><ToolGlyph $size={36} $framed>T</ToolGlyph></Tool>
          </ToolSection>
        </ToolColumn>
        <CenterColumn>
          <DocTab>
            <DocClose>
              <Ico w={16} h={16}>
                <path d="M1 1l14 14M15 1L1 15" stroke="#6e6e6e" strokeWidth="1.6" />
              </Ico>
            </DocClose>
            symbol-test.afdesign [M]
          </DocTab>
          <Artwork />
        </CenterColumn>
        <Panel>
          <PanelHeader>
            <HeaderItem $ml={0}><CloseCircle /></HeaderItem>
            <Grip $ml={22} />
            <PanelTab $ml={18} $w={88.5}>Layers</PanelTab>
            <HeaderItem $ml={333}><PanelMenu /></HeaderItem>
            <HeaderItem $ml={12}><CloseCircle /></HeaderItem>
            <Grip $ml={20} />
            <PanelTab $ml={18} $w={110.5}>Symbols</PanelTab>
          </PanelHeader>
          <Options>
            <OptLabel>Opacity:</OptLabel>
            <OpacityField>
              <OpacityText>100 %</OpacityText>
              <OptIcon $ml={10}>
                <Ico w={14} h={12}>
                  <path d="M1 1h12L7 10z" fill="#c8c8c8" />
                </Ico>
              </OptIcon>
            </OpacityField>
            <BlendSelect>
              <ControlLabel $mt={3}>Passthrough</ControlLabel>
              <Stepper />
            </BlendSelect>
            <OptIcon $ml={9}><Gear /></OptIcon>
            <OptIcon $ml={19}><Lock /></OptIcon>
            <CreateButton $ml={25} $w={158.5}>
              <Triskele />
              <ControlLabel $mt={5}>Create</ControlLabel>
            </CreateButton>
            <CreateButton $ml={5} $w={100}>
              <Triskele />
            </CreateButton>
          </Options>
          <PanelBody>
            <LayersColumn>
              <ListArea>
                <LayerList>
                  {LAYER_ROWS.map((i) => (
                    <LayerRow key={i}>
                      <PlayButton>
                        <PlayArrow />
                      </PlayButton>
                      <LayerThumb>
                        <Blob $w={36} $h={22} />
                      </LayerThumb>
                      <LayerName>(Symbol)</LayerName>
                      <CheckBox>
                        <CheckMark />
                      </CheckBox>
                    </LayerRow>
                  ))}
                  <PartialRow>
                    <PartialThumb />
                  </PartialRow>
                </LayerList>
                <ScrollTrack>
                  <ScrollThumb />
                </ScrollTrack>
              </ListArea>
              <BottomBar>
                <LayersToggle>
                  <LayersStack />
                </LayersToggle>
                <BottomIcon $ml={115}><MaskIcon /></BottomIcon>
                <BottomIcon $ml={20}><AdjustIcon /></BottomIcon>
                <FxLabel>fx</FxLabel>
                <BottomIcon $ml={116}><DocIcon /></BottomIcon>
                <BottomIcon $ml={26}><CheckerIcon /></BottomIcon>
                <BottomIcon $ml={26}><TrashIcon /></BottomIcon>
              </BottomBar>
            </LayersColumn>
            <SymbolsColumn>
              <SymbolCard>
                <SymbolThumb>
                  <Blob $w={65} $h={40} />
                </SymbolThumb>
                <SymbolName>Symbol</SymbolName>
              </SymbolCard>
            </SymbolsColumn>
          </PanelBody>
          <BottomEdge />
        </Panel>
      </Workspace>
    </Page>
  );
}
